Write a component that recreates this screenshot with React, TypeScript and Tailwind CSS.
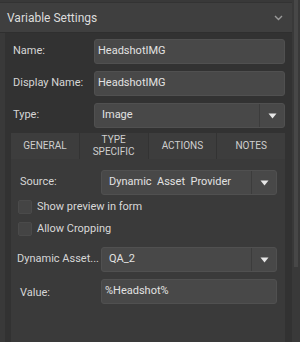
import React from 'react'

const font = { fontFamily: 'Roboto, "Liberation Sans", sans-serif' }

function Caret() {
  return (
    <svg width="9" height="6" viewBox="0 0 9 6">
      <path d="M0.5 0.5h8L4.5 5.5z" fill="#e6e6e6" />
    </svg>
  )
}

function Select({ value }: { value: string }) {
  return (
    <div className="flex-1 h-[25px] flex items-stretch bg-[#484848] border border-[#505050] rounded-[3px]">
      <div className="flex-1 flex items-center px-[7px] text-[11px] text-[#e2e2e2] whitespace-pre">
        {value}
      </div>
      <div className="w-[25px] border-l border-[#3c3c3c] flex items-center justify-center">
        <Caret />
      </div>
    </div>
  )
}

function TextInput({ value }: { value: string }) {
  return (
    <div className="flex-1 h-[25px] flex items-center px-[3px] bg-[#484848] border border-[#505050] rounded-[3px] text-[11px] text-[#e2e2e2]">
      {value}
    </div>
  )
}

function Row({ label, children }: { label: string; children: React.ReactNode }) {
  return (
    <div className="flex items-center">
      <div className="w-[81px] shrink-0 text-[11px] text-[#d6d6d6]">{label}</div>
      {children}
    </div>
  )
}

function Check({ label }: { label: string }) {
  return (
    <div className="flex items-center gap-[5px] pl-[1px]">
      <div className="w-[14px] h-[14px] rounded-[2px] bg-[#444] border border-[#4a4a4a]" />
      <span className="text-[11px] text-[#d8d8d8]">{label}</span>
    </div>
  )
}

export default function App() {
  const tabs = ['GENERAL', 'TYPE SPECIFIC', 'ACTIONS', 'NOTES']
  return (
    <div className="w-[300px] h-[342px] bg-[#393939] flex overflow-hidden" style={font}>
      <div className="w-[292px] flex flex-col">
        {/* header */}
        <div className="mt-[2px] h-[31px] shrink-0 bg-[#3f3f3f] border-t border-[#333] border-b border-b-[#2f2f2f] flex items-center justify-between pl-[7px] pr-[9px]">
          <span className="text-[12px] text-[#dcdcdc]">Variable Settings</span>
          <svg width="9" height="6" viewBox="0 0 9 6">
            <path d="M1 1l3.5 3.5L8 1" stroke="#9a9a9a" strokeWidth="1.4" fill="none" />
          </svg>
        </div>

        {/* content */}
        <div className="flex-1 ml-[5px] bg-[#323232] pl-[8px] pr-[7px] pt-[6px] flex flex-col">
          <div className="flex flex-col gap-[7px]">
            <Row label="Name:"><TextInput value="HeadshotIMG" /></Row>
            <Row label="Display Name:"><TextInput value="HeadshotIMG" /></Row>
            <Row label="Type:"><Select value="Image" /></Row>
          </div>

          <div className="mt-[5px] -ml-[2px] flex-1 flex flex-col">
            <div className="grid grid-cols-4 gap-px bg-[#333] h-[26px]">
              {tabs.map((t) => (
                <div
                  key={t}
                  className={`flex items-center justify-center text-center text-[10px] leading-[12px] text-[#cfcfcf] ${
                    t === 'TYPE SPECIFIC' ? 'bg-[#3a3a3a] px-[14px]' : 'bg-[#3d3d3d]'
                  }`}
                >
                  {t}
                </div>
              ))}
            </div>
            <div className="flex-1 bg-[#3a3a3a] pt-[11px] pl-[6px] pr-[8px] flex flex-col">
              <div className="flex items-center">
                <div className="w-[84px] shrink-0 pl-[3px] text-[11px] text-[#d6d6d6]">Source:</div>
                <Select value="Dynamic  Asset  Provider" />
              </div>
              <div className="mt-[4px] flex flex-col gap-[5px]">
                <Check label="Show preview in form" />
                <Check label="Allow Cropping" />
              </div>
              <div className="mt-[10px] flex items-center">
                <div className="w-[84px] shrink-0 text-[11px] text-[#d6d6d6] whitespace-nowrap overflow-hidden">Dynamic Asset...</div>
                <Select value="QA_2" />
              </div>
              <div className="mt-[7px] flex items-start">
                <div className="w-[84px] shrink-0 pl-[3px] pt-[6px] text-[11px] text-[#d6d6d6]">Value:</div>
                <div className="flex-1 h-[25px] px-[3px] pt-[3px] bg-[#484848] border border-[#505050] rounded-[3px] text-[11px] text-[#e2e2e2]">
                  %Headshot%
                </div>
              </div>
            </div>
          </div>
        </div>
      </div>

      {/* scrollbar */}
      <div className="w-[8px] flex">
        <div className="w-[2px]" />
        <div className="w-[4px] h-[267px] bg-[#474747]" />
      </div>
    </div>
  )
}
